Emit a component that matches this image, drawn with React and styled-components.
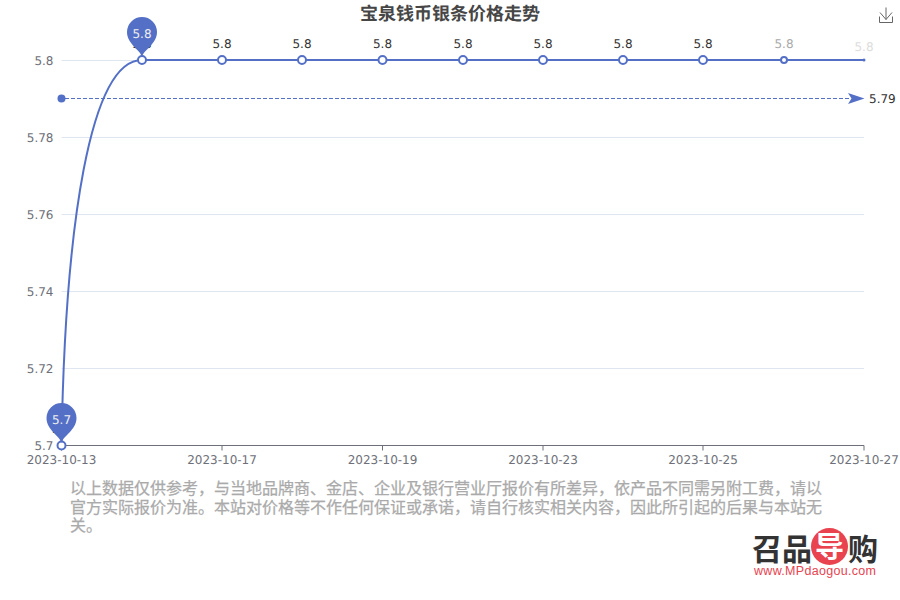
import React from 'react'
import styled, { createGlobalStyle } from 'styled-components'

const GlobalStyle = createGlobalStyle`
  html, body {
    margin: 0;
    padding: 0;
    background: #fff;
  }
`
const Page = styled.div`
  width: 900px;
  height: 600px;
  overflow: hidden;
  display: flex;
  flex-direction: column;
`
const Chart = styled.svg`
  display: block;
  flex: none;
  font-family: "DejaVu Sans", sans-serif;
  text-rendering: geometricPrecision;
`
const Note = styled.p`
  margin: 8px 0 0 70px;
  width: 756px;
  font: 16px/18.5px "Noto Sans CJK SC", "DejaVu Sans", sans-serif;
  color: #aaa;
  -webkit-text-stroke: 0.25px #aaa;
`
const Footer = styled.div`
  display: flex;
  justify-content: flex-end;
  padding-right: 20px;
`
const Logo = styled.svg`
  display: block;
  margin-top: -14px;
`

const yTicks = [
  { y: 60, label: '5.8' },
  { y: 137, label: '5.78' },
  { y: 214, label: '5.76' },
  { y: 291, label: '5.74' },
  { y: 368, label: '5.72' },
  { y: 445, label: '5.7' },
]
const xTicks = [
  { x: 61.5, label: '2023-10-13' },
  { x: 222, label: '2023-10-17' },
  { x: 382.5, label: '2023-10-19' },
  { x: 543, label: '2023-10-23' },
  { x: 703, label: '2023-10-25' },
  { x: 864, label: '2023-10-27' },
]
const points = [
  { x: 222, r: 4, label: '#333' },
  { x: 302, r: 4, label: '#333' },
  { x: 382.5, r: 4, label: '#333' },
  { x: 463, r: 4, label: '#333' },
  { x: 543, r: 4, label: '#333' },
  { x: 623, r: 4, label: '#333' },
  { x: 703, r: 4, label: '#333' },
  { x: 784, r: 3, label: '#aaa' },
]

const BLUE = '#5470c6'

const Pin = ({ x, tipY, label }) => {
  const cy = tipY - 24
  return (
    <g>
      <path
        d={`M${x} ${tipY + 1} C${x - 1.5} ${cy + 18} ${x - 15} ${cy + 12} ${x - 15} ${cy} A15 15 0 1 1 ${x + 15} ${cy} C${x + 15} ${cy + 12} ${x + 1.5} ${cy + 18} ${x} ${tipY + 1} Z`}
        fill={BLUE}
      />
      <text x={x} y={cy + 5.5} fontSize="12" fill="#eee" textAnchor="middle">{label}</text>
    </g>
  )
}

const App = () => (
  <Page>
    <GlobalStyle />
    <Chart width="900" height="470" viewBox="0 0 900 470">
      <text
        x="450"
        y="20"
        fontSize="18"
        fontWeight="bold"
        fill="#464646"
        textAnchor="middle"
        fontFamily='"Noto Sans CJK SC", sans-serif'
      >
        宝泉钱币银条价格走势
      </text>

      <path
        d="M879.5 16.5V22.5H892.5V16.5M886 7.5V19.5M880 12.5L886 19.5L892 12.5"
        fill="none"
        stroke="#666"
        strokeWidth="1"
      />

      {yTicks.slice(0, 5).map(t => (
        <line key={t.y} x1="61.5" x2="864" y1={t.y + 0.5} y2={t.y + 0.5} stroke="#e0e6f1" />
      ))}
      <line x1="61.5" x2="864" y1="445.5" y2="445.5" stroke="#6e7079" />
      {xTicks.map(t => (
        <line key={t.x} x1={t.x} x2={t.x} y1="445.5" y2="450.5" stroke="#6e7079" />
      ))}
      {yTicks.map(t => (
        <text key={t.y} x="53.5" y={t.y + 4.5} fontSize="12" fill="#6e7079" textAnchor="end">{t.label}</text>
      ))}
      {xTicks.map(t => (
        <text key={t.x} x={t.x} y="464" fontSize="12" fill="#6e7079" textAnchor="middle">{t.label}</text>
      ))}

      <path
        d="M61.5 445.5C65 225 90 60 142 60H864"
        fill="none"
        stroke={BLUE}
        strokeWidth="2"
      />

      <text x="142" y="48" fontSize="12" fill="#333" textAnchor="middle">5.8</text>
      <text x="61.5" y="433" fontSize="12" fill="#333" textAnchor="middle">5.7</text>
      {points.map(p => (
        <g key={p.x}>
          <text x={p.x} y="48" fontSize="12" fill={p.label} textAnchor="middle">5.8</text>
          <circle cx={p.x} cy="60" r={p.r} fill="#fff" stroke={BLUE} strokeWidth="2" />
        </g>
      ))}
      <text x="864" y="51" fontSize="12" fill="#ddd" textAnchor="middle">5.8</text>
      <circle cx="864" cy="60" r="1.5" fill={BLUE} />
      <circle cx="142" cy="60" r="4" fill="#fff" stroke={BLUE} strokeWidth="2" />
      <circle cx="61.5" cy="445.5" r="4" fill="#fff" stroke={BLUE} strokeWidth="2" />

      <circle cx="61.5" cy="98.5" r="4" fill={BLUE} />
      <line x1="65" x2="850" y1="98.5" y2="98.5" stroke={BLUE} strokeDasharray="4 2" />
      <path d="M864.5 98.5L848 93L851.5 98.5L848 104Z" fill={BLUE} />
      <text x="869" y="103" fontSize="12" fill="#333">5.79</text>

      <Pin x={142} tipY={56} label="5.8" />
      <Pin x={61.5} tipY={442} label="5.7" />
    </Chart>
    <Note>
      以上数据仅供参考，与当地品牌商、金店、企业及银行营业厅报价有所差异，依产品不同需另附工费，请以官方实际报价为准。本站对价格等不作任何保证或承诺，请自行核实相关内容，因此所引起的后果与本站无关。
    </Note>
    <Footer>
      <Logo width="128" height="62" viewBox="0 0 128 62">
        <g fontFamily='"Noto Sans CJK SC", sans-serif' fontWeight="bold" fontSize="30" fill="#333">
          <text x="0" y="40">召品</text>
          <text x="96" y="40">购</text>
        </g>
        <circle cx="77.5" cy="26.5" r="18.5" fill="#e8434f" />
        <text x="77.5" y="37.5" fontSize="29" fontWeight="bold" fill="#fff" textAnchor="middle" fontFamily='"Noto Sans CJK SC", sans-serif'>导</text>
        <text x="2" y="55" fontSize="12.5" fill="#e8434f" textLength="122" fontFamily='"Liberation Sans", sans-serif'>www.MPdaogou.com</text>
      </Logo>
    </Footer>
  </Page>
)

export default App
